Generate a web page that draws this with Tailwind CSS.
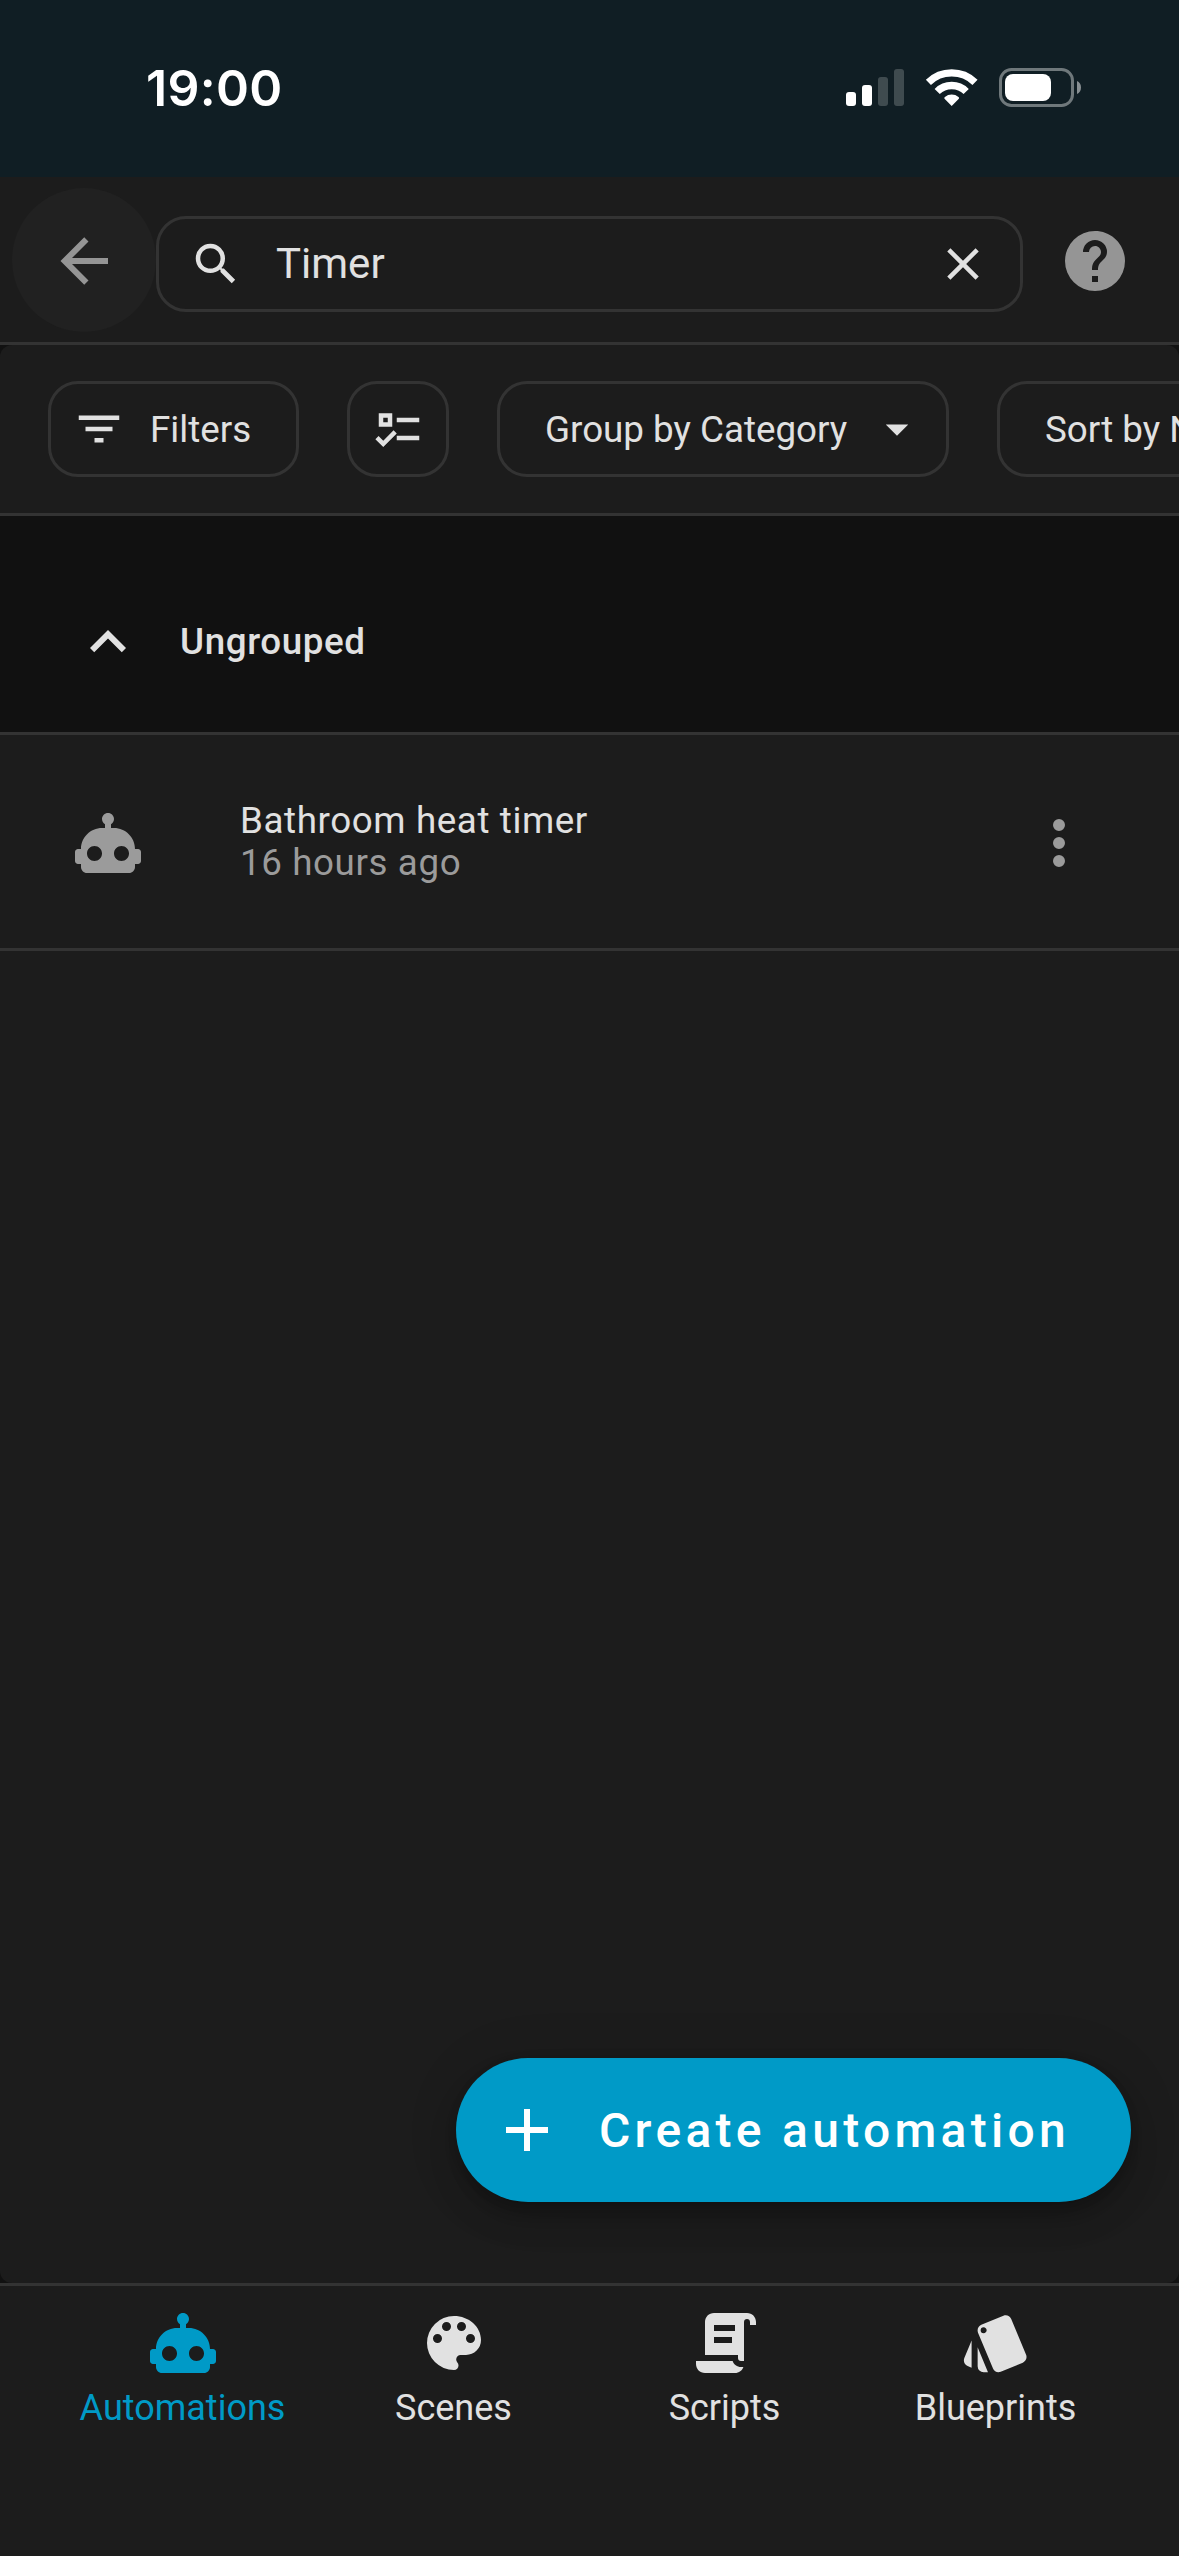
<!DOCTYPE html>
<html lang="en">
<head>
<meta charset="utf-8">
<title>Automations</title>
<script src="https://cdn.jsdelivr.net/npm/@tailwindcss/browser@4"></script>
</head>
<body class="w-[1179px] h-[2556px] overflow-hidden bg-[#111111] font-['Roboto',sans-serif] text-[#e1e1e1] flex flex-col">

<!-- Status bar -->
<div class="h-[177px] shrink-0 bg-[#101e24] flex items-start justify-between pl-[146px] pr-[98px] pt-[56px]">
  <span class="font-['Inter',sans-serif] font-semibold text-[50px] leading-[64px] tracking-[0.3px] text-white">19:00</span>
  <svg class="w-[236px] h-[40px] mt-[12px]" viewBox="0 0 236 40" fill="#fff">
    <rect x="1" y="24" width="10" height="14" rx="3"/>
    <rect x="17" y="17" width="10" height="21" rx="3"/>
    <rect x="33" y="9" width="10" height="29" rx="3" opacity=".2"/>
    <rect x="49" y="1" width="10" height="37" rx="3" opacity=".2"/>
    <g fill="none" stroke="#fff" stroke-width="7.300">
      <path d="M83.400 14.300A33.500 33.500 0 0 1 130 14.300"/>
      <path d="M92.200 23.500A20.500 20.500 0 0 1 121.200 23.500"/>
    </g>
    <path d="M106.700 38L99.800 30.900C99.100 30.200 99.200 29.400 99.900 28.900A11 11 0 0 1 113.500 28.900C114.200 29.400 114.300 30.200 113.600 30.900Z"/>
    <rect x="155.500" y="1.500" width="72" height="36" rx="11" fill="none" stroke="#fff" stroke-width="3" opacity=".4"/>
    <rect x="160" y="6" width="46" height="27" rx="8"/>
    <path d="M232 13C234.500 14 236 16.500 236 19.500S234.500 25 232 26Z" opacity=".5"/>
  </svg>
</div>

<!-- Header -->
<header class="h-[168px] shrink-0 bg-[#1c1c1c] border-b-3 border-[#333333] flex items-start pl-3">
  <div class="size-36 mt-[11px] pt-[2px] rounded-full bg-[#212121] flex items-center justify-center">
    <svg class="size-[72px]" viewBox="0 0 24 24" fill="#959595"><path d="M20,11V13H8L13.500,18.500L12.080,19.920L4.160,12L12.080,4.080L13.500,5.500L8,11H20Z"/></svg>
  </div>
  <div class="w-[867px] h-24 mt-[39px] rounded-[30px] border-3 border-[#333333] flex items-center pl-[30px] pr-[30px]">
    <svg class="size-[54px]" viewBox="0 0 24 24" fill="#e1e1e1"><path d="M9.500,3A6.500,6.500 0 0,1 16,9.500C16,11.110 15.410,12.590 14.440,13.730L14.710,14H15.500L20.500,19L19,20.500L14,15.500V14.710L13.730,14.440C12.590,15.410 11.110,16 9.500,16A6.500,6.500 0 0,1 3,9.500A6.500,6.500 0 0,1 9.500,3M9.500,5C7,5 5,7 5,9.500C5,12 7,14 9.500,14C12,14 14,12 14,9.500C14,7 12,5 9.500,5Z"/></svg>
    <span class="ml-[33px] flex-1 text-[42px] leading-[48px]">Timer</span>
    <svg class="size-[54px]" viewBox="0 0 24 24" fill="#e1e1e1"><path d="M19,6.410L17.590,5L12,10.590L6.410,5L5,6.410L10.590,12L5,17.590L6.410,19L12,13.410L17.590,19L19,17.590L13.410,12L19,6.410Z"/></svg>
  </div>
  <svg class="ml-9 mt-12 size-[72px]" viewBox="0 0 24 24" fill="#959595"><path d="M15.070,11.250L14.170,12.170C13.450,12.890 13,13.500 13,15H11V14.500C11,13.390 11.450,12.390 12.170,11.670L13.410,10.410C13.780,10.050 14,9.550 14,9C14,7.890 13.100,7 12,7A2,2 0 0,0 10,9H8A4,4 0 0,1 12,5A4,4 0 0,1 16,9C16,9.880 15.640,10.670 15.070,11.250M13,19H11V17H13M12,2A10,10 0 0,0 2,12A10,10 0 0,0 12,22A10,10 0 0,0 22,12C22,6.470 17.500,2 12,2Z"/></svg>
</header>

<main class="flex-1 bg-[#1c1c1c] rounded-[12px] flex flex-col relative overflow-hidden">
  <!-- Toolbar -->
  <div class="h-[171px] shrink-0 border-b-3 border-[#333333] flex items-center gap-12 pl-12 text-[36.750px] leading-[48px] whitespace-nowrap">
    <div class="w-[251px] h-24 shrink-0 rounded-[30px] border-3 border-[#333333] flex items-center pl-[21px]">
      <svg class="size-[54px]" viewBox="0 0 24 24" fill="#e1e1e1"><path d="M6,13H18V11H6M3,6V8H21V6M10,18H14V16H10V18Z"/></svg>
      <span class="ml-[24px] pt-[2px]">Filters</span>
    </div>
    <div class="w-[102px] h-24 shrink-0 rounded-[30px] border-3 border-[#333333] flex items-center justify-center pl-[2px]">
      <svg class="size-[54px]" viewBox="0 0 24 24" fill="#e1e1e1"><path d="M3,5H9V11H3V5M5,7V9H7V7H5M11,7H21V9H11V7M11,15H21V17H11V15M5,20L1.500,16.500L2.910,15.090L5,17.170L9.590,12.590L11,14L5,20Z"/></svg>
    </div>
    <div class="w-[452px] h-24 shrink-0 rounded-[30px] border-3 border-[#333333] flex items-center justify-between pl-[45px] pr-[22px]">
      <span class="pt-[2px]">Group by Category</span>
      <svg class="size-[54px]" viewBox="0 0 24 24" fill="#e1e1e1"><path d="M7,10L12,15L17,10H7Z"/></svg>
    </div>
    <div class="w-[390px] h-24 shrink-0 rounded-[30px] border-3 border-[#333333] flex items-center pl-[45px]">
      <span class="pt-[2px]">Sort by Name</span>
    </div>
  </div>

  <!-- Group heading -->
  <div class="h-[219px] shrink-0 bg-[#111111] border-b-3 border-[#333333] flex items-center pl-[72px] pt-[36px]">
    <svg class="size-[72px]" viewBox="0 0 24 24" fill="#e1e1e1"><path d="M7.410,15.410L12,10.830L16.590,15.410L18,14L12,8L6,14L7.410,15.410Z"/></svg>
    <span class="ml-9 font-medium text-[36.750px] leading-[48px] tracking-[0.600px]">Ungrouped</span>
  </div>

  <!-- Automation row -->
  <div class="h-[216px] shrink-0 border-b-3 border-[#333333] flex items-center pl-[72px] pr-[84px]">
    <svg class="size-[72px] mt-[3px]" viewBox="0 0 24 24" fill="#9b9b9b"><path d="M22 14H21C21 10.130 17.870 7 14 7H13V5.730C13.600 5.390 14 4.740 14 4C14 2.900 13.110 2 12 2S10 2.900 10 4C10 4.740 10.400 5.390 11 5.730V7H10C6.130 7 3 10.130 3 14H2C1.450 14 1 14.450 1 15V18C1 18.550 1.450 19 2 19H3V20C3 21.110 3.900 22 5 22H19C20.110 22 21 21.110 21 20V19H22C22.550 19 23 18.550 23 18V15C23 14.450 22.550 14 22 14M7.500 18C6.120 18 5 16.880 5 15.500S6.120 13 7.500 13 10 14.120 10 15.500 8.880 18 7.500 18M16.500 18C15.120 18 14 16.880 14 15.500S15.120 13 16.500 13 19 14.120 19 15.500 17.880 18 16.500 18Z"/></svg>
    <div class="ml-24 flex-1 text-[36.750px] leading-[42px] tracking-[0.600px]">
      <div>Bathroom heat timer</div>
      <div class="text-[#9b9b9b]">16 hours ago</div>
    </div>
    <svg class="size-[72px] mt-[3px]" viewBox="0 0 24 24" fill="#9b9b9b"><path d="M12,16A2,2 0 0,1 14,18A2,2 0 0,1 12,20A2,2 0 0,1 10,18A2,2 0 0,1 12,16M12,10A2,2 0 0,1 14,12A2,2 0 0,1 12,14A2,2 0 0,1 10,12A2,2 0 0,1 12,10M12,4A2,2 0 0,1 14,6A2,2 0 0,1 12,8A2,2 0 0,1 10,6A2,2 0 0,1 12,4Z"/></svg>
  </div>

  <!-- Floating action button -->
  <div class="absolute right-12 bottom-[81px] w-[675px] h-36 rounded-full bg-[#009ac7] text-white flex items-center pl-[35px] shadow-[0_9px_15px_-3px_rgba(0,0,0,0.2),0_18px_30px_0_rgba(0,0,0,0.14),0_3px_54px_0_rgba(0,0,0,0.12)]">
    <svg class="size-[72px]" viewBox="0 0 24 24" fill="#fff"><path d="M19,13H13V19H11V13H5V11H11V5H13V11H19V13Z"/></svg>
    <span class="ml-9 pt-[2px] font-medium text-[48px] leading-[56px] tracking-[4.286px] whitespace-nowrap">Create automation</span>
  </div>
</main>

<!-- Bottom navigation -->
<nav class="h-[273px] shrink-0 bg-[#1c1c1c] border-t-3 border-[#333333] grid grid-cols-4 pl-[47px] pr-12 pt-[21px] text-[36px] leading-[48px] text-center">
  <div class="flex flex-col items-center gap-[5px] text-[#009ac7]">
    <svg class="size-[72px]" viewBox="0 0 24 24" fill="currentColor"><path d="M22 14H21C21 10.130 17.870 7 14 7H13V5.730C13.600 5.390 14 4.740 14 4C14 2.900 13.110 2 12 2S10 2.900 10 4C10 4.740 10.400 5.390 11 5.730V7H10C6.130 7 3 10.130 3 14H2C1.450 14 1 14.450 1 15V18C1 18.550 1.450 19 2 19H3V20C3 21.110 3.900 22 5 22H19C20.110 22 21 21.110 21 20V19H22C22.550 19 23 18.550 23 18V15C23 14.450 22.550 14 22 14M7.500 18C6.120 18 5 16.880 5 15.500S6.120 13 7.500 13 10 14.120 10 15.500 8.880 18 7.500 18M16.500 18C15.120 18 14 16.880 14 15.500S15.120 13 16.500 13 19 14.120 19 15.500 17.880 18 16.500 18Z"/></svg>
    <span>Automations</span>
  </div>
  <div class="flex flex-col items-center gap-[5px]">
    <svg class="size-[72px]" viewBox="0 0 24 24" fill="currentColor"><path d="M17.500,12A1.500,1.500 0 0,1 16,10.500A1.500,1.500 0 0,1 17.500,9A1.500,1.500 0 0,1 19,10.500A1.500,1.500 0 0,1 17.500,12M14.500,8A1.500,1.500 0 0,1 13,6.500A1.500,1.500 0 0,1 14.500,5A1.500,1.500 0 0,1 16,6.500A1.500,1.500 0 0,1 14.500,8M9.500,8A1.500,1.500 0 0,1 8,6.500A1.500,1.500 0 0,1 9.500,5A1.500,1.500 0 0,1 11,6.500A1.500,1.500 0 0,1 9.500,8M6.500,12A1.500,1.500 0 0,1 5,10.500A1.500,1.500 0 0,1 6.500,9A1.500,1.500 0 0,1 8,10.500A1.500,1.500 0 0,1 6.500,12M12,3A9,9 0 0,0 3,12A9,9 0 0,0 12,21A1.500,1.500 0 0,0 13.500,19.500C13.500,19.110 13.350,18.760 13.110,18.500C12.880,18.230 12.730,17.880 12.730,17.500A1.500,1.500 0 0,1 14.230,16H16A5,5 0 0,0 21,11C21,6.580 16.970,3 12,3Z"/></svg>
    <span>Scenes</span>
  </div>
  <div class="flex flex-col items-center gap-[5px]">
    <svg class="size-[72px] ml-[3px]" viewBox="0 0 24 24" fill="currentColor"><path d="M17.800,20C17.400,21.200 16.300,22 15,22H5C3.300,22 2,20.700 2,19V18H5L14.200,18C14.600,19.200 15.700,20 17,20H17.800M19,2C20.700,2 22,3.300 22,5V6H20V5C20,4.400 19.600,4 19,4C18.400,4 18,4.400 18,5V18H17C16.400,18 16,17.600 16,17V16H5V5C5,3.300 6.300,2 8,2H19M8,6V8H15V6H8M8,10V12H14V10H8Z"/></svg>
    <span>Scripts</span>
  </div>
  <div class="flex flex-col items-center gap-[5px]">
    <svg class="size-[72px]" viewBox="0 0 24 24" fill="currentColor"><path d="M2.530,19.650L3.870,20.210V11.180L1.440,17.040C1.030,18.060 1.500,19.230 2.530,19.650M22.030,15.950L17.070,4C16.760,3.230 16.030,2.770 15.260,2.750C15,2.750 14.730,2.790 14.470,2.900L7.100,5.950C6.350,6.260 5.890,7 5.870,7.750C5.860,8 5.910,8.290 6,8.550L11,20.500C11.290,21.280 12.030,21.740 12.810,21.750C13.070,21.750 13.330,21.700 13.580,21.600L20.940,18.550C21.960,18.130 22.450,16.960 22.030,15.950M7.880,8.750A1,1 0 0,1 6.880,7.750A1,1 0 0,1 7.880,6.750C8.430,6.750 8.880,7.200 8.880,7.750C8.880,8.300 8.430,8.750 7.880,8.750M5.880,19.750A2,2 0 0,0 7.880,21.750H9.330L5.880,13.410V19.750Z"/></svg>
    <span>Blueprints</span>
  </div>
</nav>
</body>
</html>
